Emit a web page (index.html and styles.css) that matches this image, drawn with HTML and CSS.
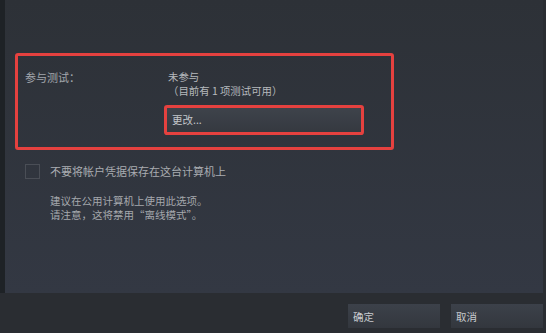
FILE: index.html
```html
<!DOCTYPE html>
<html lang="zh-CN">
<head>
<meta charset="utf-8">
<link rel="stylesheet" href="styles.css">
</head>
<body>
<div class="window">
  <div class="main">
    <div class="strip"></div>
    <div class="panel">
      <div class="beta-box">
        <div class="beta-label">参与测试：</div>
        <div class="beta-value">
          <div class="line">未参与</div>
          <div class="line">（目前有 1 项测试可用）</div>
          <div class="change-btn">更改...</div>
        </div>
      </div>
      <div class="check-row">
        <span class="checkbox"></span>
        <span class="check-label">不要将帐户凭据保存在这台计算机上</span>
      </div>
      <div class="hint">
        <div class="line">建议在公用计算机上使用此选项。</div>
        <div class="line">请注意，这将禁用“离线模式”。</div>
      </div>
    </div>
  </div>
  <div class="footer">
    <div class="btn">确定</div>
    <div class="btn">取消</div>
  </div>
</div>
</body>
</html>
```

FILE: styles.css
```css
html, body {
  margin: 0;
  padding: 0;
}
body {
  width: 546px;
  height: 333px;
  overflow: hidden;
  background: #2a2d32;
  font-family: "Noto Sans CJK SC", "Noto Sans", sans-serif;
  font-size: 11px;
  color: #b3b6bb;
}
.window {
  display: flex;
  flex-direction: column;
  height: 333px;
}
.main {
  display: flex;
  height: 293px;
}
.strip {
  width: 5px;
  background: #1e2226;
}
.panel {
  flex: 1;
  margin-right: 3px;
  background: linear-gradient(#2d3137, #333843);
  padding: 53px 0 0 10px;
  box-sizing: border-box;
}
.beta-box {
  box-sizing: border-box;
  width: 379px;
  height: 97px;
  border: 3px solid #e5413f;
  border-radius: 3px;
  padding: 13.5px 0 0 7px;
  display: grid;
  grid-template-columns: 143px 1fr;
  align-items: start;
}
.beta-label {
  line-height: 14.5px;
  color: #a3a7ad;
}
.beta-value .line {
  font-size: 10.4px;
  line-height: 14.5px;
  color: #b6b9bd;
}
.change-btn {
  margin: 9.5px 0 0 -1px;
  width: 194px;
  height: 24px;
  box-sizing: border-box;
  padding-left: 5px;
  line-height: 24px;
  font-size: 10.5px;
  color: #c3c6ca;
  background: linear-gradient(#3e434b, #353940);
  border-radius: 1px;
  box-shadow: 0 0 0 3px #e5413f;
}
.check-row {
  display: flex;
  align-items: center;
  margin: 14px 0 0 10px;
  gap: 10px;
}
.checkbox {
  width: 15px;
  height: 15px;
  box-sizing: border-box;
  border: 1.5px solid #4a4e56;
}
.check-label {
  line-height: 15px;
  color: #a9acb1;
}
.hint {
  margin: 15px 0 0 35px;
  font-size: 10.5px;
  color: #a5a8ad;
}
.hint .line {
  line-height: 14px;
}
.footer {
  flex: 1;
  display: flex;
  justify-content: flex-end;
  gap: 11px;
  padding: 11px 3px 0 0;
}
.btn {
  width: 92px;
  height: 24px;
  box-sizing: border-box;
  padding-left: 5px;
  line-height: 26px;
  font-size: 10.5px;
  color: #c8cbcf;
  background: linear-gradient(#3c414a, #33373e);
}
```
